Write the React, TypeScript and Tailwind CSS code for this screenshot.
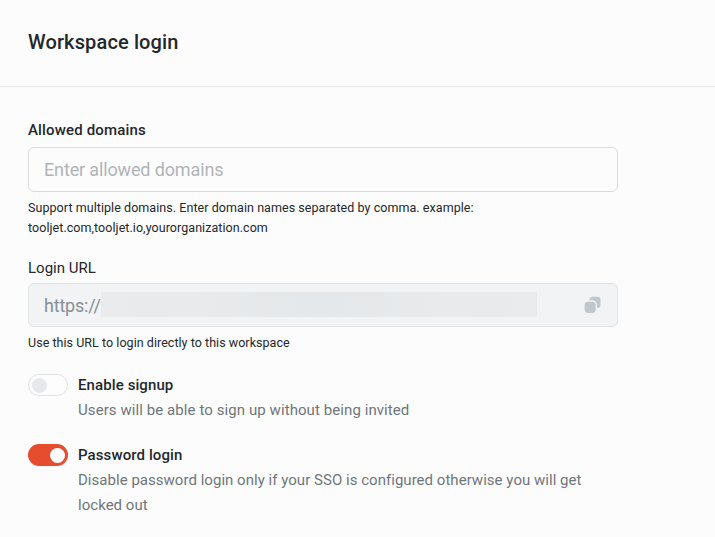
import type { ReactNode } from 'react';

function Toggle({ on, label }: { on: boolean; label: string }) {
  return (
    <button
      type="button"
      role="switch"
      aria-checked={on}
      aria-label={label}
      className={
        on
          ? 'flex h-[22px] w-10 shrink-0 items-center justify-end rounded-full bg-[#e54d2e] pr-[3.5px]'
          : 'flex h-[22px] w-10 shrink-0 items-center justify-start rounded-full border border-[#dfe3e6] bg-[#fdfdfd] pl-[2.5px]'
      }
    >
      <span className={on ? 'size-[15px] rounded-full bg-white' : 'size-[15px] rounded-full bg-[#e6e8eb]'} />
    </button>
  );
}

function ToggleRow({ on, title, children }: { on: boolean; title: string; children: ReactNode }) {
  return (
    <div className="flex gap-2.5">
      <Toggle on={on} label={title} />
      <div className="-mt-px leading-[25px] whitespace-nowrap">
        <div className="text-[15px] font-medium tracking-[0.1px] text-[#23282c]">{title}</div>
        <div className="text-[15px] tracking-[0.03px] text-[#6f767b]">{children}</div>
      </div>
    </div>
  );
}

function CopyIcon() {
  return (
    <svg width="17" height="18" viewBox="0 0 17 18" fill="#c1c8cd">
      <rect x="5.5" y="0.7" width="11" height="11.3" rx="3.2" />
      <rect x="0" y="5" width="12.4" height="12.6" rx="4" stroke="#f1f3f5" strokeWidth="1.3" />
    </svg>
  );
}

export default function App() {
  return (
    <div className="h-[537px] w-[715px] overflow-hidden bg-[#fcfcfc] font-[Roboto,sans-serif] text-[#23282c]">
      <header className="flex h-[87px] border-b border-[#e6e8eb] pt-[30px] pl-7">
        <h1 className="text-[20px] leading-6 font-medium tracking-[0.13px]">Workspace login</h1>
      </header>
      <main className="w-[618px] pt-[33px] pl-7 whitespace-nowrap">
        <div className="h-[27px] text-[15px] leading-5 font-medium tracking-[0.16px]">Allowed domains</div>
        <input
          placeholder="Enter allowed domains"
          className="block h-[45px] w-full rounded-md border border-[#d7dbdf] bg-transparent px-[15px] text-[18px] tracking-[-0.14px] placeholder:text-[#b0b4b8]"
        />
        <p className="mt-1.5 text-[12.5px] leading-5 tracking-[0.06px]">
          Support multiple domains. Enter domain names separated by comma. example:
          <br />
          tooljet.com,tooljet.io,yourorganization.com
        </p>
        <div className="mt-5 h-[25px] text-[15px] leading-5">Login URL</div>
        <div className="flex h-11 items-center rounded-md border border-[#dfe3e6] bg-[#f1f3f5] pr-4 pl-[15px]">
          <span className="w-[57px] text-[18px] tracking-[-0.2px] text-[#889096]">https://</span>
          <span className="mb-px h-[25px] w-[436px] bg-linear-to-r from-[#eaebed] via-[#e5e8ea] to-[#eaebed]" />
          <span className="ml-auto"><CopyIcon /></span>
        </div>
        <p className="mt-1.5 text-[12.5px] leading-5 tracking-[0.04px]">Use this URL to login directly to this workspace</p>
        <div className="mt-[21px] flex flex-col gap-[21px]">
          <ToggleRow on={false} title="Enable signup">
            <span className="tracking-[0.08px]">Users will be able to sign up without being invited</span>
          </ToggleRow>
          <ToggleRow on title="Password login">
            Disable password login only if your SSO is configured otherwise you will get
            <br />
            locked out
          </ToggleRow>
        </div>
      </main>
    </div>
  );
}
